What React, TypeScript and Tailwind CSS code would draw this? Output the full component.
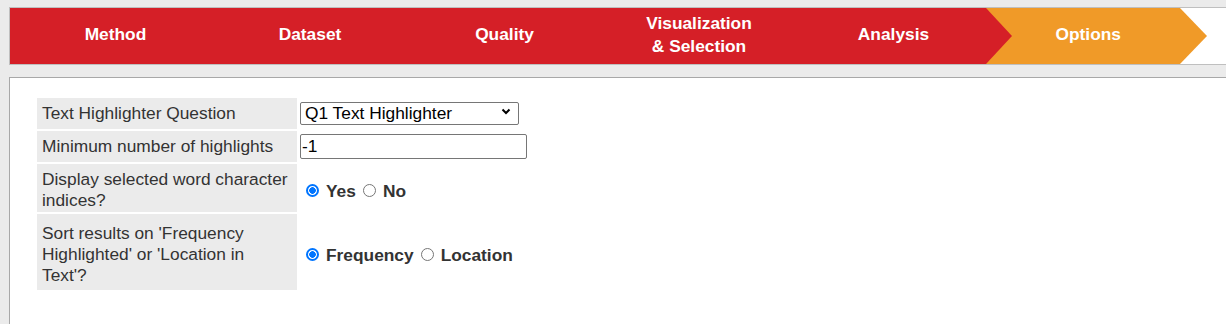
const steps = ["Method", "Dataset", "Quality", "Visualization\n& Selection", "Analysis"];

function StepLabel({ text }: { text: string }) {
  return (
    <div className="flex h-full w-[194.5px] shrink-0 items-center justify-center pb-[2px] text-center text-[17.33px] font-bold leading-[23.3px] whitespace-pre-line text-white">
      {text}
    </div>
  );
}

function StepBar() {
  return (
    <div className="ml-[9px] flex h-[58px] border-y border-l border-[#bfbfbf] bg-white">
      <div className="flex h-full w-[976px] shrink-0 bg-[#d51f27] pl-[8.25px]">
        {steps.map((s) => (
          <StepLabel key={s} text={s} />
        ))}
      </div>
      <div className="relative h-full w-[221px] shrink-0 bg-[#f09a28] pl-[5px] [clip-path:polygon(0_0,194px_0,221px_50%,194px_100%,0_100%)]">
        <span className="absolute top-0 left-0 h-full w-[26px] bg-[#d51f27] [clip-path:polygon(0_0,100%_50%,0_100%)]" />
        <StepLabel text="Options" />
      </div>
    </div>
  );
}

function Row({
  label,
  h,
  tall,
  children,
}: {
  label: string;
  h: string;
  tall?: boolean;
  children: React.ReactNode;
}) {
  return (
    <div className={`flex gap-[2px] ${h}`}>
      <div
        className={`flex w-[260px] shrink-0 items-center bg-[#ebebeb] pr-[5px] pl-[5px] leading-[21px] text-[#333] ${tall ? "pt-[4px]" : ""}`}
      >
        {label}
      </div>
      <div className={`flex items-center ${tall ? "pt-[8px]" : ""}`}>{children}</div>
    </div>
  );
}

function Radio({ name, label, checked }: { name: string; label: string; checked?: boolean }) {
  return (
    <label className="flex items-center">
      <input
        type="radio"
        name={name}
        defaultChecked={checked}
        className="m-0 mb-[3px] ml-[7px] h-[13px] w-[13px] shrink-0 appearance-none rounded-full border border-[#767676] bg-white checked:border-2 checked:border-[#0075ff] checked:bg-[radial-gradient(circle,#0075ff_0_3px,#fff_3.6px)]"
      />
      <span className="ml-[7px] font-bold text-[#333]">{label}</span>
    </label>
  );
}

export default function App() {
  return (
    <div className="h-[324px] overflow-hidden bg-[#ebebeb] pt-[7px] font-['Liberation_Sans',Arial,sans-serif] text-[17.33px]">
      <StepBar />
      <div className="mt-[12px] ml-[9px] h-[247px] border-t border-l border-[#a8a8a8] bg-white pt-[20px] pl-[27px]">
        <div className="flex flex-col gap-[2px]">
          <Row label="Text Highlighter Question" h="h-[31px]">
            <div className="relative ml-[1px]">
              <select
                defaultValue="q1"
                className="h-[23px] w-[219px] appearance-none rounded-[2px] border border-[#767676] bg-white pl-[4px] text-[17.33px] leading-[21px] text-black outline-none"
              >
                <option value="q1">Q1 Text Highlighter</option>
              </select>
              <svg
                className="pointer-events-none absolute top-[7px] right-[8px]"
                width="10"
                height="7"
                viewBox="0 0 10 7"
              >
                <polyline points="1.5,1.5 5,5 8.5,1.5" fill="none" stroke="#000" strokeWidth="2" />
              </svg>
            </div>
          </Row>
          <Row label="Minimum number of highlights" h="h-[31px]">
            <input
              type="text"
              defaultValue="-1"
              className="ml-[1px] h-[25px] w-[227px] rounded-[2px] border border-[#767676] bg-white pl-[1px] text-[17.33px] text-black outline-none"
            />
          </Row>
          <Row label="Display selected word character indices?" h="h-[48px]" tall>
            <Radio name="indices" label="Yes" checked />
            <Radio name="indices" label="No" />
          </Row>
          <Row label="Sort results on 'Frequency Highlighted' or 'Location in Text'?" h="h-[76px]" tall>
            <Radio name="sort" label="Frequency" checked />
            <Radio name="sort" label="Location" />
          </Row>
        </div>
      </div>
    </div>
  );
}
